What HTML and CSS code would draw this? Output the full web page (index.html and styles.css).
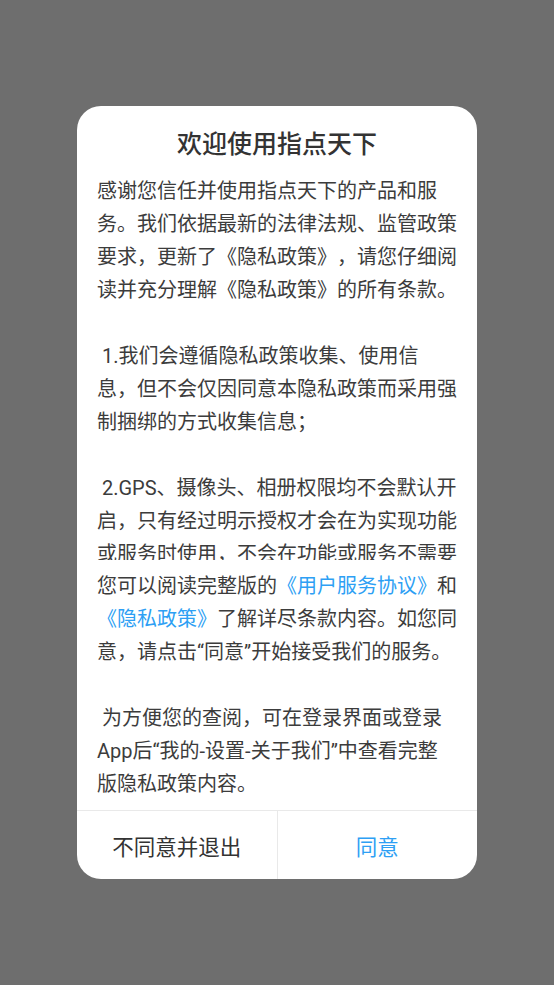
FILE: index.html
```html
<!DOCTYPE html>
<html lang="zh-CN">
<head>
<meta charset="utf-8">
<title>欢迎使用指点天下</title>
<link rel="stylesheet" href="styles.css">
</head>
<body>
<div class="overlay">
  <div class="dialog">
    <h1 class="title">欢迎使用指点天下</h1>
    <div class="scroll">
      <p class="para">感谢您信任并使用指点天下的产品和服<br>务。我们依据最新的法律法规、监管政策<br>要求，更新了《隐私政策》，请您仔细阅<br>读并充分理解《隐私政策》的所有条款。</p>
      <p class="para gap"> 1.我们会遵循隐私政策收集、使用信<br>息，但不会仅因同意本隐私政策而采用强<br>制捆绑的方式收集信息；</p>
      <p class="para gap"> 2.GPS、摄像头、相册权限均不会默认开<br>启，只有经过明示授权才会在为实现功能<br>或服务时使用，不会在功能或服务不需要<br>时收集您的个人信息。</p>
    </div>
    <div class="extra">
      <p class="para">您可以阅读完整版的<span class="link">《用户服务协议》</span>和<br><span class="link">《隐私政策》</span>了解详尽条款内容。如您同<br>意，请点击“同意”开始接受我们的服务。</p>
      <p class="para gap"> 为方便您的查阅，可在登录界面或登录<br>App后“我的-设置-关于我们”中查看完整<br>版隐私政策内容。</p>
    </div>
    <div class="actions">
      <div class="btn btn-cancel">不同意并退出</div>
      <div class="btn btn-ok">同意</div>
    </div>
  </div>
</div>
</body>
</html>
```

FILE: styles.css
```css
html, body {
  margin: 0;
  padding: 0;
}

body {
  background: #6e6e6e;
  font-family: Roboto, "Noto Sans CJK SC", "Noto Sans", sans-serif;
  color: #333333;
  text-spacing-trim: space-all;
}

.overlay {
  width: 554px;
  height: 985px;
  display: flex;
  align-items: center;
  justify-content: center;
}

.dialog {
  width: 400px;
  background: #ffffff;
  border-radius: 24px;
  overflow: hidden;
  display: flex;
  flex-direction: column;
}

.title {
  margin: 22px 0 0;
  font-size: 25px;
  line-height: 34px;
  font-weight: 500;
  text-align: center;
  color: #333333;
}

.scroll {
  margin-top: 13px;
  height: 385px;
  overflow: hidden;
  padding: 0 14px 0 20px;
}

.extra {
  margin-top: 10px;
  padding: 0 14px 0 20px;
  margin-bottom: 9px;
}

.para {
  margin: 0;
  font-size: 20px;
  line-height: 33px;
  white-space: pre-wrap;
  color: #3c3c3c;
}

.para.gap {
  margin-top: 33px;
}

.link {
  color: #2e9ff4;
}

.actions {
  display: flex;
  height: 68px;
  border-top: 1px solid #e9e9e9;
}

.btn {
  flex: 1;
  display: flex;
  align-items: center;
  justify-content: center;
  font-size: 21.5px;
  color: #333333;
}

.btn-ok {
  border-left: 1px solid #e9e9e9;
  color: #2e9ff4;
}
```
